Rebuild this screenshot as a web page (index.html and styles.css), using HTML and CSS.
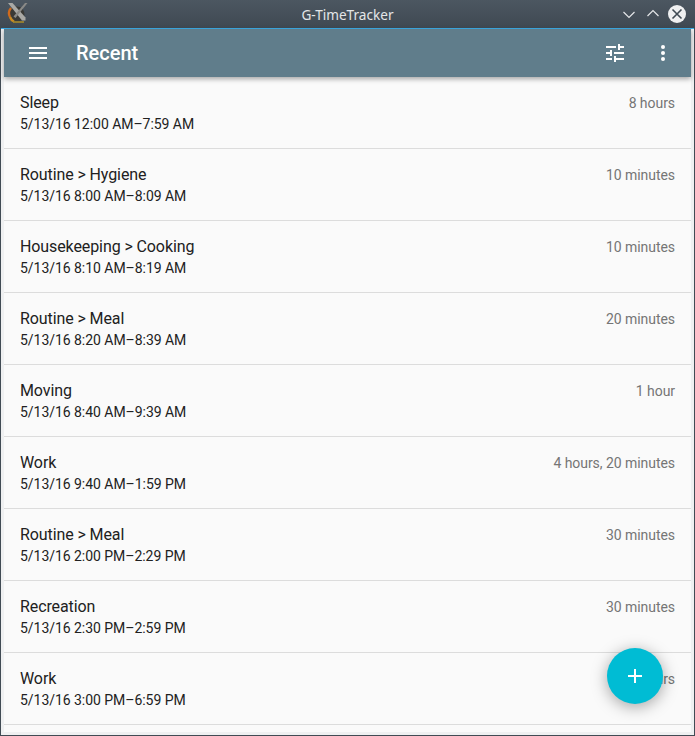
FILE: index.html
```html
<!DOCTYPE html>
<html lang="en">
<head>
  <meta charset="UTF-8" />
  <title>G-TimeTracker</title>
  <link rel="stylesheet" href="styles.css">
</head>
<body>
  <div class="window">
    <div class="titlebar">
      <svg class="app-icon" width="24" height="24" viewBox="0 0 24 24">
        <circle cx="11" cy="12" r="7.5" fill="#3a3a36"/>
        <path d="M5 6a8 8 0 0 0-1 9" fill="none" stroke="#d06a1c" stroke-width="2.4"/>
        <path d="M4 15a8 8 0 0 0 4 4.500" fill="none" stroke="#c98a22" stroke-width="2.4"/>
        <path d="M7 20h11" fill="none" stroke="#a68a2a" stroke-width="1.6"/>
        <path d="M2 1h4.500l13 14.500v3h-3.500z" fill="#a9a9a5"/>
        <path d="M19 1h2.500l-12 15-2-1.500z" fill="#8a8a87"/>
      </svg>
      <div class="title">G-TimeTracker</div>
      <div class="controls">
        <svg width="12" height="12" viewBox="0 0 12 12"><path d="M.5 4L6 9.500 11.500 4" fill="none" stroke="#e4e6e8" stroke-width="1.2"/></svg>
        <svg width="12" height="12" viewBox="0 0 12 12"><path d="M.5 8L6 2.500 11.500 8" fill="none" stroke="#e4e6e8" stroke-width="1.2"/></svg>
        <svg class="close" width="18" height="18" viewBox="0 0 18 18"><circle cx="9" cy="9" r="9" fill="#eff0f1"/><path d="M4.500 4.500l9 9M13.500 4.500l-9 9" stroke="#3f4a53" stroke-width="1.6"/></svg>
      </div>
    </div>
    <div class="frame">
      <div class="app">
        <header class="toolbar">
          <svg class="menu-icon" width="18" height="12" viewBox="0 0 18 12"><path d="M0 0h18v2H0zM0 5h18v2H0zM0 10h18v2H0z" fill="#fff"/></svg>
          <h1>Recent</h1>
          <svg class="tune-icon" width="18" height="18" viewBox="3 3 18 18"><path d="M3 17v2h6v-2H3zM3 5v2h10V5H3zm10 16v-2h8v-2h-8v-2h-2v6h2zM7 9v2H3v2h4v2h2V9H7zm14 4v-2H11v2h10zm-6-4h2V7h4V5h-4V3h-2v6z" fill="#fff"/></svg>
          <svg class="more-icon" width="4" height="16" viewBox="0 0 4 16"><circle cx="2" cy="2" r="2" fill="#fff"/><circle cx="2" cy="8" r="2" fill="#fff"/><circle cx="2" cy="14" r="2" fill="#fff"/></svg>
        </header>
        <ul class="list">
          <li><div class="row"><span class="name">Sleep</span><span class="length">8 hours</span></div><div class="range">5/13/16 12:00 AM–7:59 AM</div></li>
          <li><div class="row"><span class="name">Routine &gt; Hygiene</span><span class="length">10 minutes</span></div><div class="range">5/13/16 8:00 AM–8:09 AM</div></li>
          <li><div class="row"><span class="name">Housekeeping &gt; Cooking</span><span class="length">10 minutes</span></div><div class="range">5/13/16 8:10 AM–8:19 AM</div></li>
          <li><div class="row"><span class="name">Routine &gt; Meal</span><span class="length">20 minutes</span></div><div class="range">5/13/16 8:20 AM–8:39 AM</div></li>
          <li><div class="row"><span class="name">Moving</span><span class="length">1 hour</span></div><div class="range">5/13/16 8:40 AM–9:39 AM</div></li>
          <li><div class="row"><span class="name">Work</span><span class="length">4 hours, 20 minutes</span></div><div class="range">5/13/16 9:40 AM–1:59 PM</div></li>
          <li><div class="row"><span class="name">Routine &gt; Meal</span><span class="length">30 minutes</span></div><div class="range">5/13/16 2:00 PM–2:29 PM</div></li>
          <li><div class="row"><span class="name">Recreation</span><span class="length">30 minutes</span></div><div class="range">5/13/16 2:30 PM–2:59 PM</div></li>
          <li><div class="row"><span class="name">Work</span><span class="length">4 hours</span></div><div class="range">5/13/16 3:00 PM–6:59 PM</div></li>
        </ul>
        <button class="fab"><svg width="14" height="14" viewBox="0 0 14 14"><path d="M6 0h2v6h6v2H8v6H6V8H0V6h6z" fill="#fff"/></svg></button>
      </div>
    </div>
  </div>
</body>
</html>
```

FILE: styles.css
```css
html, body {
  margin: 0;
  height: 100%;
  overflow: hidden;
}
body {
  font-family: Roboto, sans-serif;
  background: #414b54;
}
.window {
  height: 736px;
  display: flex;
  flex-direction: column;
}
.titlebar {
  flex: none;
  height: 28px;
  display: flex;
  align-items: center;
  position: relative;
  background: linear-gradient(#4c5761, #3f4952);
  color: #e4e6e8;
  font-family: "Noto Sans", sans-serif;
  font-size: 13.6px;
}
.app-icon {
  margin-left: 6px;
}
.title {
  position: absolute;
  left: 0;
  right: 0;
  text-align: center;
}
.controls {
  margin-left: auto;
  margin-right: 9px;
  display: flex;
  align-items: center;
  gap: 12px;
  position: relative;
}
.close {
  margin-left: -3px;
}
/* light window border around the app */
.frame {
  flex: 1;
  min-height: 0;
  margin: 0 1px 1px;
  padding: 0 3px 3px;
  background: #eff0f1;
  border-top: 1px solid #3daee9;
  display: flex;
}
.app {
  flex: 1;
  min-width: 0;
  background: #fafafa;
  position: relative;
  display: flex;
  flex-direction: column;
}
.toolbar {
  flex: none;
  height: 48px;
  display: flex;
  align-items: center;
  background: #607d8b;
  box-shadow: 0 2px 5px rgba(0,0,0,0.35);
  position: relative;
  z-index: 1;
  color: #fff;
}
.menu-icon {
  margin-left: 25px;
}
.toolbar h1 {
  margin: 0 0 0 29px;
  font-size: 20px;
  font-weight: 500;
  flex: 1;
}
.more-icon {
  margin: 0 26px 0 37px;
}
.list {
  list-style: none;
  margin: 0;
  padding: 0;
  flex: 1;
  overflow: hidden;
}
.list li {
  height: 70px;
  border-bottom: 1px solid #dcdcdc;
  padding: 0 16px 1px;
  display: flex;
  flex-direction: column;
  justify-content: center;
  gap: 4px;
}
.row {
  display: flex;
  justify-content: space-between;
  align-items: baseline;
}
.name {
  font-size: 16px;
  letter-spacing: -0.1px;
  color: #212121;
}
.length {
  font-size: 14px;
  letter-spacing: -0.05px;
  color: #757575;
}
.range {
  font-size: 14px;
  letter-spacing: -0.04px;
  color: #212121;
}
.fab {
  position: absolute;
  left: 603px;
  top: 619px;
  width: 56px;
  height: 56px;
  border: 0;
  padding: 0;
  border-radius: 50%;
  background: #00bcd4;
  box-shadow: 0 3px 16px rgba(0,0,0,0.35);
  display: flex;
  align-items: center;
  justify-content: center;
  z-index: 2;
}
```
